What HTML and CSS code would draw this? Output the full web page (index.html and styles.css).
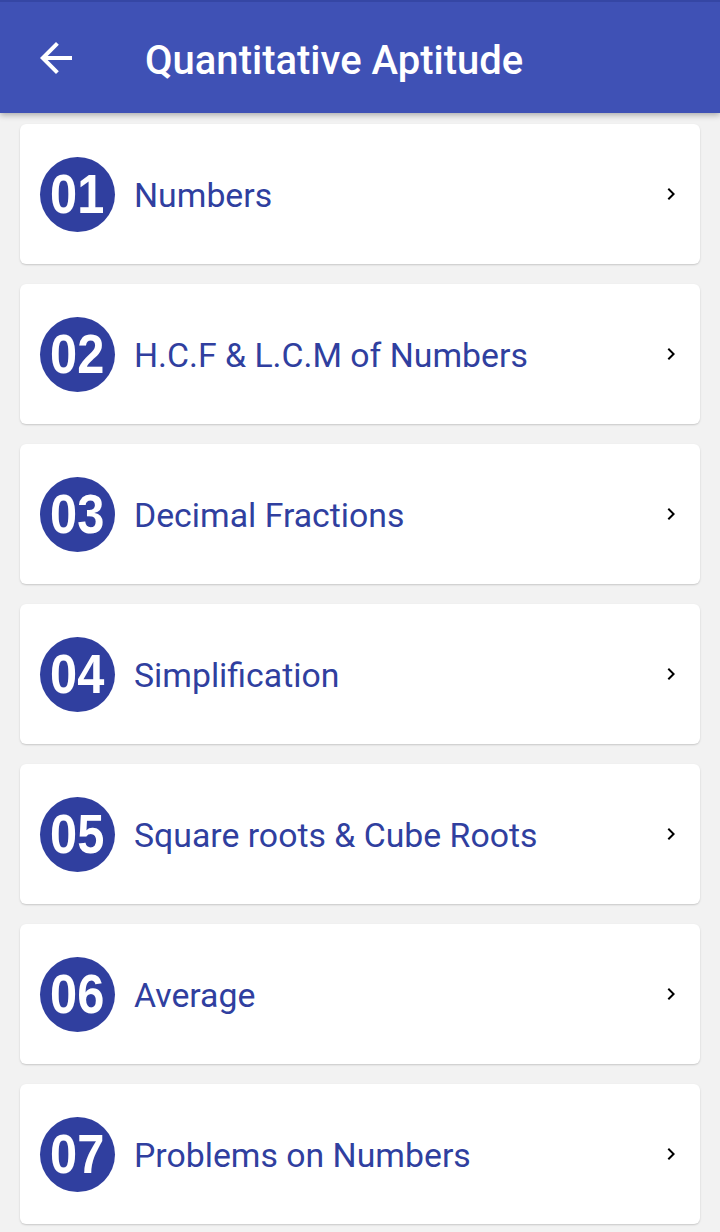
FILE: index.html
```html
<!DOCTYPE html>
<html lang="en">
<head>
    <meta charset="UTF-8">
    <meta name="viewport" content="width=device-width, initial-scale=1.0">
    <title>Quantitative Aptitude</title>
    <link rel="stylesheet" href="styles.css">
</head>
<body>
    <header class="app-bar">
        <svg class="back-icon" viewBox="0 0 24 24" width="48" height="48">
            <path d="M20 11H7.83l5.59-5.59L12 4l-8 8 8 8 1.41-1.41L7.83 13H20v-2z" fill="#fff"/>
        </svg>
        <div class="app-title">Quantitative Aptitude</div>
    </header>

    <div class="topic-list">
        <div class="topic-card">
            <div class="topic-num"><span>01</span></div>
            <div class="topic-name">Numbers</div>
            <svg class="chevron" viewBox="0 0 24 24" width="24" height="24"><path d="M10 6L8.59 7.41 13.17 12l-4.58 4.59L10 18l6-6z"/></svg>
        </div>
        <div class="topic-card">
            <div class="topic-num"><span>02</span></div>
            <div class="topic-name">H.C.F &amp; L.C.M of Numbers</div>
            <svg class="chevron" viewBox="0 0 24 24" width="24" height="24"><path d="M10 6L8.59 7.41 13.17 12l-4.58 4.59L10 18l6-6z"/></svg>
        </div>
        <div class="topic-card">
            <div class="topic-num"><span>03</span></div>
            <div class="topic-name">Decimal Fractions</div>
            <svg class="chevron" viewBox="0 0 24 24" width="24" height="24"><path d="M10 6L8.59 7.41 13.17 12l-4.58 4.59L10 18l6-6z"/></svg>
        </div>
        <div class="topic-card">
            <div class="topic-num"><span>04</span></div>
            <div class="topic-name">Simplification</div>
            <svg class="chevron" viewBox="0 0 24 24" width="24" height="24"><path d="M10 6L8.59 7.41 13.17 12l-4.58 4.59L10 18l6-6z"/></svg>
        </div>
        <div class="topic-card">
            <div class="topic-num"><span>05</span></div>
            <div class="topic-name">Square roots &amp; Cube Roots</div>
            <svg class="chevron" viewBox="0 0 24 24" width="24" height="24"><path d="M10 6L8.59 7.41 13.17 12l-4.58 4.59L10 18l6-6z"/></svg>
        </div>
        <div class="topic-card">
            <div class="topic-num"><span>06</span></div>
            <div class="topic-name">Average</div>
            <svg class="chevron" viewBox="0 0 24 24" width="24" height="24"><path d="M10 6L8.59 7.41 13.17 12l-4.58 4.59L10 18l6-6z"/></svg>
        </div>
        <div class="topic-card">
            <div class="topic-num"><span>07</span></div>
            <div class="topic-name">Problems on Numbers</div>
            <svg class="chevron" viewBox="0 0 24 24" width="24" height="24"><path d="M10 6L8.59 7.41 13.17 12l-4.58 4.59L10 18l6-6z"/></svg>
        </div>
    </div>
</body>
</html>
```

FILE: styles.css
```css
body {
    margin: 0;
    background-color: #f2f2f2;
    font-family: Roboto, "Noto Sans", sans-serif;
}
.app-bar {
    height: 111px;
    background: #3f51b5;
    border-top: 2px solid #3546a4;
    display: flex;
    align-items: center;
    padding-left: 32px;
    box-shadow: 0 2px 6px rgba(0, 0, 0, 0.3);
}
.back-icon {
    flex-shrink: 0;
}
.app-title {
    margin-left: 65px;
    margin-top: 5px;
    color: #fff;
    font-size: 40px;
    font-weight: 500;
}
.topic-list {
    display: flex;
    flex-direction: column;
    gap: 20px;
    padding: 11px 20px 8px 20px;
}
.topic-card {
    height: 140px;
    background: #fff;
    border-radius: 6px;
    box-shadow: 0 1px 2px rgba(0, 0, 0, 0.18);
    display: flex;
    align-items: center;
    padding-left: 20px;
    padding-right: 17px;
}
.topic-num {
    width: 75px;
    height: 75px;
    border-radius: 50%;
    background: #303f9f;
    color: #fff;
    font-family: "Liberation Sans", Arial, sans-serif;
    font-weight: bold;
    font-size: 56px;
    display: flex;
    align-items: center;
    justify-content: center;
    flex-shrink: 0;
}
.topic-num span {
    transform: scaleX(0.87);
    margin-top: -1px;
}
.topic-name {
    flex: 1;
    margin-left: 19px;
    margin-top: 2px;
    color: #303f9f;
    font-size: 33.8px;
}
.chevron {
    flex-shrink: 0;
}
```
